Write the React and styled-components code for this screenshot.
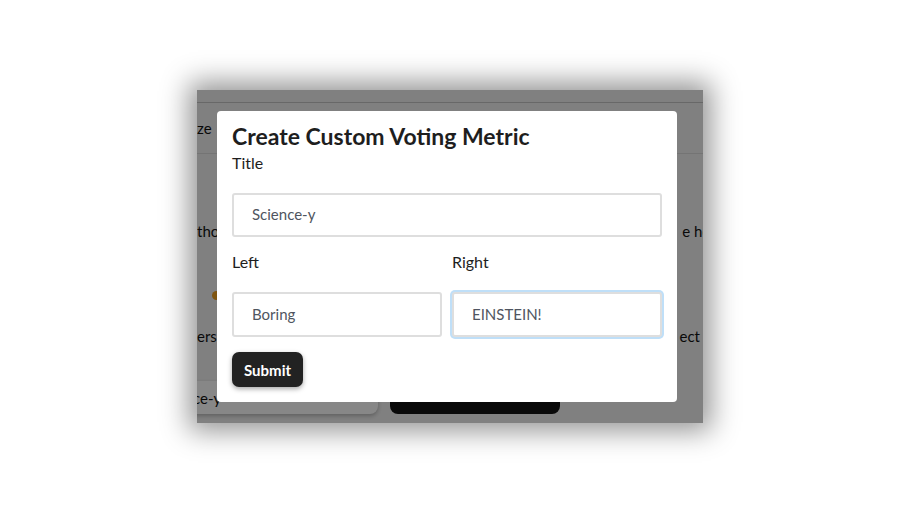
import styled, { createGlobalStyle } from "styled-components";

const GlobalStyle = createGlobalStyle`
  body {
    margin: 0;
    background: #ffffff;
    font-family: "Lato", "Open Sans", sans-serif;
  }
`;

function App() {
  return (
    <>
      <GlobalStyle />
      <Page>
        <Frame>
          {/* the page behind the dialog */}
          <BackApp>
            <TopBar />
            <TabRow>
              <BackText>ze</BackText>
            </TabRow>
            <BackRow $h={60} $top={47}>
              <BackText>tho</BackText>
              <BackText>e ho</BackText>
            </BackRow>
            <BackRow $h={20} $top={24}>
              <Dot />
            </BackRow>
            <BackRow $h={20} $top={21}>
              <BackText>ers</BackText>
              <BackText>ect c</BackText>
            </BackRow>
            <BottomRow>
              <BackInput>ce-y</BackInput>
              <BackButton />
            </BottomRow>
          </BackApp>

          <Overlay>
            <Modal>
              <Heading>Create Custom Voting Metric</Heading>
              <Label>Title</Label>
              <Input readOnly defaultValue="Science-y" />
              <Columns>
                <Field>
                  <Label>Left</Label>
                  <Input readOnly defaultValue="Boring" />
                </Field>
                <Field>
                  <Label>Right</Label>
                  <Input readOnly defaultValue="EINSTEIN!" $focused />
                </Field>
              </Columns>
              <SubmitButton type="button">Submit</SubmitButton>
            </Modal>
          </Overlay>
        </Frame>
      </Page>
    </>
  );
}

export default App;

const Page = styled.div`
  padding: 90px 0 0 197px;
  height: 515px;
  box-sizing: border-box;
`;

const Frame = styled.div`
  position: relative;
  width: 506px;
  height: 333px;
  overflow: hidden;
  box-shadow: 0 0 26px 8px rgba(0, 0, 0, 0.42);
`;

const BackApp = styled.div`
  height: 100%;
  box-sizing: border-box;
  padding-bottom: 9px;
  background: #f2f2f2;
  display: flex;
  flex-direction: column;
  color: #111;
  font-size: 15px;
`;

const TopBar = styled.div`
  height: 12px;
  border-bottom: 1px solid #c4c4c4;
`;

const TabRow = styled.div`
  height: 50px;
  display: flex;
  align-items: center;
  border-bottom: 1px solid #dcdcdc;
`;

const BackRow = styled.div`
  height: ${(p) => p.$h}px;
  margin-top: ${(p) => p.$top}px;
  display: flex;
  align-items: center;
  justify-content: space-between;
`;

const BackText = styled.span`
  font-size: 15px;
  white-space: nowrap;
  &:last-child:not(:first-child) {
    margin-right: -8px;
  }
`;

const Dot = styled.span`
  width: 9px;
  height: 9px;
  margin-left: 15px;
  border-radius: 50%;
  background: #f0a020;
`;

const BottomRow = styled.div`
  margin-top: auto;
  display: flex;
  align-items: flex-end;
  gap: 12px;
  height: 34px;
`;

const BackInput = styled.div`
  width: 185px;
  height: 33px;
  box-sizing: border-box;
  background: #ffffff;
  border-radius: 0 0 8px 0;
  box-shadow: 0 2px 4px rgba(0, 0, 0, 0.25);
  display: flex;
  align-items: center;
  font-size: 15px;
  margin-left: -4px;
`;

const BackButton = styled.div`
  width: 170px;
  height: 34px;
  background: #111;
  border-radius: 8px;
`;

const Overlay = styled.div`
  position: absolute;
  inset: 0;
  background: rgba(0, 0, 0, 0.47);
  padding: 21px 0 0 20px;
`;

const Modal = styled.div`
  width: 460px;
  height: 291px;
  box-sizing: border-box;
  background: #ffffff;
  border-radius: 4px;
  padding: 12px 15px 15px;
  display: flex;
  flex-direction: column;
  align-items: flex-start;
`;

const Heading = styled.h2`
  margin: 0;
  font-size: 23px;
  line-height: 26px;
  font-weight: 700;
  color: #1e1e1e;
`;

const Label = styled.label`
  display: block;
  font-size: 16px;
  line-height: 20px;
  color: #1e1e1e;
  margin: 4px 0 20px;
`;

const Input = styled.input`
  display: block;
  width: 100%;
  height: 45px;
  box-sizing: border-box;
  border: 2px solid #dedede;
  border-radius: 3px;
  padding: 0 18px 2px;
  font-family: "Lato", "Open Sans", sans-serif;
  font-size: 15px;
  color: #4f5560;
  outline: none;
  box-shadow: ${(p) => (p.$focused ? "0 0 0 2px #bfdff8" : "none")};
`;

const Columns = styled.div`
  width: 100%;
  display: grid;
  grid-template-columns: 1fr 1fr;
  gap: 10px;
  margin-top: 11px;
`;

const Field = styled.div`
  display: flex;
  flex-direction: column;
`;

const SubmitButton = styled.button`
  margin-top: 15px;
  height: 35px;
  padding: 0 12px;
  border: none;
  border-radius: 7px;
  background: #222222;
  color: #ffffff;
  font-family: "Lato", "Open Sans", sans-serif;
  font-size: 15px;
  font-weight: 700;
  box-shadow: 0 2px 5px rgba(0, 0, 0, 0.35);
`;
